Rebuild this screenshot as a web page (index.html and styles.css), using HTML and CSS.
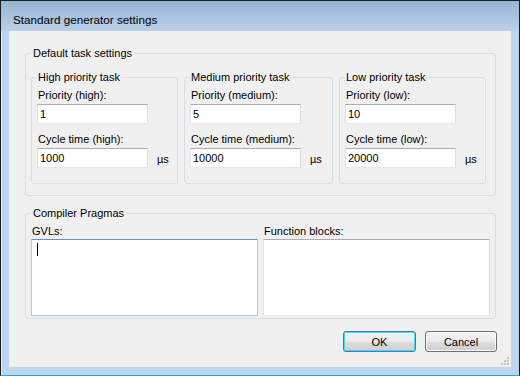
FILE: index.html
```html
<!DOCTYPE html>
<html lang="en">
<head>
    <meta charset="UTF-8">
    <meta name="viewport" content="width=device-width, initial-scale=1.0">
    <title>Standard generator settings</title>
    <link rel="stylesheet" href="styles.css">
</head>
<body>

    <div class="window">
        <div class="titlebar">Standard generator settings</div>

        <div class="client">
            <fieldset class="group group-defaults">
                <legend>Default task settings</legend>

                <div class="task-row">
                    <fieldset class="group task">
                        <legend>High priority task</legend>
                        <label class="field-label" for="prioHigh">Priority (high):</label>
                        <input class="textbox" type="text" id="prioHigh" value="1">
                        <label class="field-label second" for="cycleHigh">Cycle time (high):</label>
                        <div class="unit-row">
                            <input class="textbox" type="text" id="cycleHigh" value="1000">
                            <span class="unit">µs</span>
                        </div>
                    </fieldset>

                    <fieldset class="group task task-medium">
                        <legend>Medium priority task</legend>
                        <label class="field-label" for="prioMedium">Priority (medium):</label>
                        <input class="textbox" type="text" id="prioMedium" value="5">
                        <label class="field-label second" for="cycleMedium">Cycle time (medium):</label>
                        <div class="unit-row">
                            <input class="textbox" type="text" id="cycleMedium" value="10000">
                            <span class="unit">µs</span>
                        </div>
                    </fieldset>

                    <fieldset class="group task">
                        <legend>Low priority task</legend>
                        <label class="field-label" for="prioLow">Priority (low):</label>
                        <input class="textbox" type="text" id="prioLow" value="10">
                        <label class="field-label second" for="cycleLow">Cycle time (low):</label>
                        <div class="unit-row">
                            <input class="textbox" type="text" id="cycleLow" value="20000">
                            <span class="unit">µs</span>
                        </div>
                    </fieldset>
                </div>
            </fieldset>

            <fieldset class="group group-pragmas">
                <legend>Compiler Pragmas</legend>

                <div class="pragma-row">
                    <div class="pragma-col">
                        <span class="field-label">GVLs:</span>
                        <div class="memo memo-focused"><span class="caret"></span></div>
                    </div>
                    <div class="pragma-col">
                        <span class="field-label">Function blocks:</span>
                        <div class="memo"></div>
                    </div>
                </div>
            </fieldset>

            <div class="buttons">
                <button class="btn btn-default">OK</button>
                <button class="btn btn-cancel">Cancel</button>
            </div>

            <!-- grip de redimensionamento -->
            <svg class="size-grip" width="9" height="9" viewBox="0 0 9 9">
                <rect x="6" y="0" width="2" height="2" fill="#c4c4c4"/>
                <rect x="3" y="3" width="2" height="2" fill="#c4c4c4"/>
                <rect x="6" y="3" width="2" height="2" fill="#c4c4c4"/>
                <rect x="0" y="6" width="2" height="2" fill="#c4c4c4"/>
                <rect x="3" y="6" width="2" height="2" fill="#c4c4c4"/>
                <rect x="6" y="6" width="2" height="2" fill="#c4c4c4"/>
            </svg>
        </div>
    </div>

</body>
</html>
```

FILE: styles.css
```css
/* Reset */
* {
    margin: 0;
    padding: 0;
    box-sizing: border-box;
}

body {
    font-family: "Liberation Sans", Arial, sans-serif;
    font-size: 11px;
    color: #000;
    background-color: #fff;
}

.window {
    width: 520px;
    height: 376px;
    display: flex;
    flex-direction: column;
    padding: 0 8px 8px 8px;
    background-color: #bcd4ec;
    border: 1px solid #1c1c1c;
    border-bottom-color: #3aa3c4;
    box-shadow: inset 1px 1px 0 rgba(255, 255, 255, 0.6);
}

.titlebar {
    height: 30px;
    margin: 0 -8px;
    padding: 12px 0 0 12px;
    font-size: 11.7px;
    line-height: 14px;
    color: #000;
    background: linear-gradient(#97b3d3, #b9d1ea);
}

.client {
    position: relative;
    flex: 1;
    background-color: #f0f0f0;
    padding-top: 16px;
}

/* Group boxes */
.group {
    border: 1px solid #d5dfe5;
    border-radius: 3px;
    min-width: 0;
}

.group legend {
    line-height: 13px;
    padding: 0 2px;
    color: #000;
}

.group-defaults {
    margin: 0 15px 0 16px;
    padding: 11px 9px 11px 5px;
}

.task-row {
    display: grid;
    grid-template-columns: 147px 149px 147px;
    gap: 6px;
}

.task {
    padding: 5px 5px 15px 5px;
    display: flex;
    flex-direction: column;
    align-items: flex-start;
}

.task legend {
    padding: 0 1px;
}

.field-label {
    display: block;
    line-height: 13px;
    padding-left: 1px;
    margin-bottom: 2px;
}

.field-label.second {
    margin-top: 9px;
}

.textbox {
    width: 111px;
    height: 20px;
    padding: 0 2px;
    font: inherit;
    color: #000;
    background-color: #fff;
    border: 1px solid;
    border-color: #abadb3 #dbdfe6 #e3e9ef #e2e3ea;
    outline: none;
}

.unit-row {
    display: flex;
    align-items: center;
    gap: 9px;
}

.unit {
    padding-top: 1px;
}

/* Compiler pragmas */
.group-pragmas {
    margin: 11px 15px 0 16px;
    padding: 5px 5px 2px 5px;
}

.pragma-row {
    display: grid;
    grid-template-columns: 1fr 1fr;
    gap: 5px;
}

.pragma-col .field-label {
    margin-bottom: 1px;
}

.memo {
    height: 77px;
    padding: 3px 5px;
    background-color: #fff;
    border: 1px solid;
    border-color: #abadb3 #dbdfe6 #e3e9ef #e2e3ea;
}

.memo-focused {
    border-color: #5c98cf #a9cbe8 #a9cbe8 #a9cbe8;
}

.caret {
    display: block;
    width: 1px;
    height: 13px;
    background-color: #000;
}

/* Buttons */
.buttons {
    display: flex;
    justify-content: flex-end;
    gap: 9px;
    margin-top: 12px;
    padding-right: 14px;
}

.btn {
    width: 73px;
    height: 21px;
    font: inherit;
    color: #000;
    border: 1px solid #707070;
    border-radius: 3px;
    background: linear-gradient(#f2f2f2 0%, #ebebeb 50%, #dddddd 51%, #cfcfcf 100%);
    box-shadow: inset 0 0 0 1px #fcfcfc;
}

.btn-default {
    border-color: #3c7fb1;
    box-shadow: inset 0 0 0 1px #48d6fb;
}

.btn-cancel {
    width: 72px;
}

.size-grip {
    position: absolute;
    right: 1px;
    bottom: 1px;
}
```
